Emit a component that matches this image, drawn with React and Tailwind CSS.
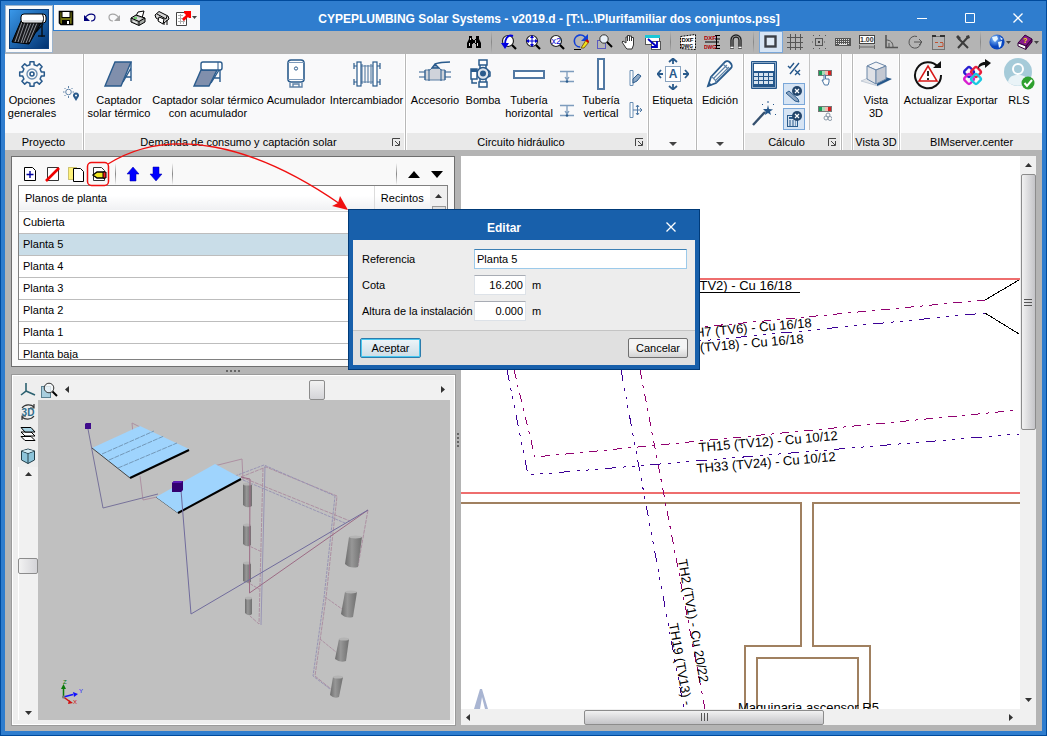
import { useState } from 'react';

const floors = ['Cubierta', 'Planta 5', 'Planta 4', 'Planta 3', 'Planta 2', 'Planta 1', 'Planta baja'];

const INK = '#2a5b8c';

function Ico({ w = 16, h = 16, children, ...rest }) {
  return (
    <svg width={w} height={h} viewBox={`0 0 ${w} ${h}`} fill="none" className="shrink-0" aria-hidden="true" {...rest}>
      {children}
    </svg>
  );
}

/* ---------- Quick access icons ---------- */

function LogoIcon() {
  return (
    <Ico w={40} h={40}>
      <defs>
        <linearGradient id="logoBg" x1="0" y1="0" x2="1" y2="1">
          <stop offset="0" stopColor="#3b9aec" />
          <stop offset="1" stopColor="#00306e" />
        </linearGradient>
      </defs>
      <rect width="40" height="40" fill="url(#logoBg)" />
      <rect x="0.5" y="0.5" width="39" height="39" stroke="#0b3f7e" />
      <path d="M33 13V28M29 27H36M27 23L34 15" stroke="#081018" strokeWidth="1.5" />
      <path d="M12 12L3 33L20 35L32 14Z" fill="#17181c" stroke="#000" />
      <path d="M13 13L6 33M16 13L9 33M19 14L12 34M22 14L14 34M25 14L17 34M28 14L20 33" stroke="#a9adb5" strokeWidth="0.8" />
      <rect x="12" y="5" width="25" height="9" rx="3" fill="#fff" stroke="#000" />
      <path d="M14 12H35" stroke="#b9bcc2" />
      <path d="M33 5C35 7 35 12 33 14" stroke="#000" />
    </Ico>
  );
}

const SaveIcon = () => (
  <Ico>
    <path d="M1.5 1.5H14.5V14.5H3L1.5 13Z" fill="#6f6f10" stroke="#000" strokeWidth="1.6" />
    <rect x="4" y="1.5" width="8" height="6" fill="#fff" stroke="#000" />
    <rect x="4" y="10" width="8" height="5" fill="#000" />
    <rect x="9" y="11" width="2" height="3" fill="#fff" />
  </Ico>
);

const UndoIcon = () => (
  <Ico>
    <path d="M3 8C6 3 13 3 13 7C13 10 11 11 9 11" stroke="#00007a" strokeWidth="1.2" />
    <path d="M2 5V11H8Z" fill="#00007a" />
  </Ico>
);

const RedoIcon = () => (
  <Ico>
    <path d="M13 8C10 3 3 3 3 7C3 10 5 11 7 11" stroke="#a5a5a5" strokeWidth="1.2" />
    <path d="M14 5V11H8Z" fill="#a5a5a5" />
  </Ico>
);

const PrinterIcon = () => (
  <Ico>
    <path d="M6 6L8 2L14 1L12 8Z" fill="#fff" stroke="#000" />
    <path d="M1 8L6 5L15 8V12L9 15.5L1 12Z" fill="#a4a8a4" stroke="#000" />
    <path d="M1 8L9 11.5L15 8M9 11.5V15" stroke="#000" />
    <path d="M3 8L6 6.500L12 8.500L9 10.500Z" fill="#dcdcdc" />
    <path d="M3 11L7 13" stroke="#fff" />
    <path d="M4 8H7" stroke="#00c000" />
  </Ico>
);

const PlotterIcon = () => (
  <Ico>
    <path d="M1 5L5 1.5L14 6L15 9L10 13L2 8Z" fill="#d4d4d4" stroke="#000" />
    <path d="M3 4L12 9L13 6" stroke="#000" />
    <path d="M5 7L4 11L9 14L10 9Z" fill="#fff" stroke="#000" />
    <path d="M13 10V15M10 12V15" stroke="#000" />
  </Ico>
);

const ExportSheetIcon = () => (
  <Ico>
    <path d="M1.5 2.5H11.5V15.5H1.5Z" fill="#fff" stroke="#444" />
    <path d="M3 5.5H8M3 8.5H9M3 11.5H10M5.5 4V14M8.5 7V14" stroke="#b0b0b0" />
    <path d="M7 9L11 5L9 3V1H16V8H14L13 7L9 11Z" fill="#f00" />
  </Ico>
);

const Caret = () => (
  <Ico w={5} h={3}>
    <path d="M0 0H5L2.5 3Z" fill="#444" />
  </Ico>
);

/* ---------- View toolbar icons ---------- */

const Lens = () => (
  <>
    <circle cx="7" cy="7" r="5.5" fill="#fff" stroke="#222" strokeWidth="1.2" />
    <path d="M11 11L15 15" stroke="#000" strokeWidth="2.2" />
  </>
);

const toolGroups = [
  [
    ['Buscar', <Ico>
      <path d="M3 2H6V5H7V10H6V14H1V9L3 5ZM13 2H10V5H9V10H10V14H15V9L13 5ZM6 6H10V9H6Z" fill="#000" />
      <path d="M3.5 9V12M11.5 9V12M4.5 4V6" stroke="#ddd" />
    </Ico>],
  ],
  [
    ['Vista anterior', <Ico>
      <Lens />
      <path d="M12 2C6 0 4 6 4 10" stroke="#0000e0" strokeWidth="2" />
      <path d="M0 9H8L4 15Z" fill="#0000e0" />
    </Ico>],
    ['Ver todo', <Ico>
      <Lens />
      <path d="M7 2V12M2 7H12" stroke="#0000d0" />
      <path d="M7 1L9 4H5ZM7 13L9 10H5ZM1 7L4 5V9ZM13 7L10 5V9Z" fill="#0000d0" />
    </Ico>],
    ['Doble', <Ico>
      <Lens />
      <text x="2.5" y="10" fontSize="9" fontFamily="Liberation Sans" fill="#0000d0">x2</text>
    </Ico>],
    ['Redibujar', <Ico>
      <path d="M13 5A6 6 0 1 0 7 13" stroke="#1040d8" strokeWidth="1.6" />
      <path d="M15 0V7H8Z" fill="#1040d8" />
      <path d="M8 14L13 6L16 8L11 14Z" fill="#f2e21c" stroke="#5a3000" strokeWidth="0.7" />
      <path d="M12.500 7L14 5L16 7L15 9Z" fill="#c00" />
      <path d="M1 15.500H8" stroke="#000" />
    </Ico>],
    ['Zoom ventana', <Ico>
      <rect x="0.5" y="6.5" width="8" height="8" stroke="#0000d0" strokeDasharray="1 1" />
      <circle cx="7" cy="5" r="4.2" fill="#e8f0f8" stroke="#333" />
      <path d="M10 8L15 13" stroke="#000" strokeWidth="2" />
    </Ico>],
    ['Mover', <Ico>
      <path d="M5 14L1 8L2 7L5 9V3H6.5V7V1.500H8.5V7V2H10.5V7V3.5H12.5V11L11 15H6Z" fill="#fff" stroke="#333" />
    </Ico>],
    ['Ventanas', <Ico>
      <rect x="0.5" y="1.5" width="14" height="9" fill="#fff" stroke="#555" />
      <rect x="0" y="1" width="15" height="3" fill="#19c8d8" />
      <rect x="6.5" y="7.5" width="9" height="8" fill="#fff" stroke="#555" />
      <path d="M3 5L11 12M12 7V13H6" stroke="#0000c0" strokeWidth="1.8" />
    </Ico>],
  ],
  [
    ['Importar DXF', <Ico>
      <path d="M0.5 2.5L15.5 0.5V15.500L0.5 14.5Z" fill="#fff" stroke="#000" strokeDasharray="2 1" />
      <text x="1.5" y="8" fontSize="6" fontWeight="bold" fontFamily="Liberation Sans" fill="#000">DXF</text>
      <text x="1" y="14" fontSize="5" fontWeight="bold" fontFamily="Liberation Sans" fill="#000">DWG</text>
    </Ico>],
    ['Capas DXF', <Ico>
      <path d="M1 8H15M11 1.500H16M11 5H16M11 11.500H16M11 14.500H16M12.500 1V15" stroke="#000" />
      <text x="0" y="6" fontSize="6" fontWeight="bold" fontFamily="Liberation Sans" fill="#b00000">DXF</text>
      <text x="0" y="15" fontSize="5" fontWeight="bold" fontFamily="Liberation Sans" fill="#b00000">DWG</text>
    </Ico>],
    ['Referencia a objetos', <Ico>
      <path d="M4 15V6A4 4 0 0 1 12 6V15" stroke="#222" strokeWidth="3.4" />
      <path d="M4 13V6A4 4 0 0 1 12 6V13" stroke="#8c8c8c" />
      <path d="M2.500 13.500H5.500M10.500 13.500H13.500" stroke="#fff" strokeWidth="1.5" />
    </Ico>],
  ],
  [
    ['Marco', <Ico><rect x="2.5" y="2.5" width="10" height="10" fill="#dfeaf6" stroke="#3c4048" strokeWidth="2.4" /></Ico>],
    ['Rejilla', <Ico><path d="M3.5 0V16M8.5 0V16M13.5 0V16M0 3.5H16M0 8.5H16M0 13.5H16" stroke="#555" /></Ico>],
    ['Malla', <Ico>
      <rect x="4.5" y="4.5" width="7" height="7" stroke="#555" />
      <rect x="7" y="7" width="2" height="2" fill="#444" />
      <path d="M2 1.5H15M2 14.5H15M1 8H3M13 8H15" stroke="#555" strokeDasharray="1 5" />
    </Ico>],
    ['Teclado', <Ico>
      <rect x="0" y="4" width="16" height="8" fill="#555" />
      <path d="M1 5.5H15M1 7.5H15M1 9.5H15" stroke="#e0e0e0" strokeDasharray="1 1" />
      <path d="M4 10.5H12" stroke="#e0e0e0" />
    </Ico>],
    ['Cotas', <Ico>
      <rect x="0.5" y="1.5" width="15" height="8" fill="#fff" stroke="#444" />
      <text x="1" y="8" fontSize="7" fontWeight="bold" fontFamily="Liberation Sans" fill="#333">1.00</text>
      <path d="M0 13H16M0.5 11V15M15.5 11V15" stroke="#666" />
    </Ico>],
    ['Ortogonal', <Ico>
      <path d="M3 1V13.5H15" stroke="#555" strokeWidth="1.6" />
      <path d="M3 6C8 6 10 9 10 13M6 9V13" stroke="#555" />
    </Ico>],
    ['Polar', <Ico>
      <path d="M14 8A6 6 0 1 1 10 2.5M7 8H15M12 5L15 8L12 11" stroke="#555" />
    </Ico>],
    ['Seleccionar', <Ico>
      <rect x="1.5" y="2.5" width="12" height="13" stroke="#333" strokeDasharray="1 1" />
      <path d="M4 8.500H7M9 8.500H12M7 12.500H12V9" stroke="#c05030" />
      <path d="M1 2H5M9 2H14" stroke="#333" strokeWidth="2" />
    </Ico>],
    ['Herramientas', <Ico>
      <path d="M3 4L13 14M13 3L3 14" stroke="#3c3c3c" strokeWidth="2" />
      <path d="M1 3L3 1L6 4L4 6ZM11 2L14 1L15 4L12 5Z" fill="#3c3c3c" />
    </Ico>],
  ],
];

const GlobeIcon = () => (
  <Ico>
    <defs>
      <radialGradient id="globe" cx="0.35" cy="0.3">
        <stop offset="0" stopColor="#8ec8ff" />
        <stop offset="1" stopColor="#0846c0" />
      </radialGradient>
    </defs>
    <circle cx="8" cy="8" r="7.6" fill="url(#globe)" />
    <path d="M3 3L8 2L9 5L6 8L4 6ZM9 8L13 7L12 12L10 14ZM11 3L14 5L12 6Z" fill="#e6f6ff" />
  </Ico>
);

const BookIcon = () => (
  <Ico>
    <path d="M1 9L8 1L15 5L9 12Z" fill="#8a1a8c" stroke="#33003a" />
    <path d="M1 9V12L9 15.5V12Z" fill="#fff" stroke="#33003a" />
    <path d="M9 12V15L15 8V5Z" fill="#6a0a6c" stroke="#33003a" />
    <text x="6" y="9" fontSize="7" fontWeight="bold" fontFamily="Liberation Sans" fill="#ffe800">?</text>
  </Ico>
);

/* ---------- Ribbon icons ---------- */

// Outline of a cog: each tooth is four points between the two radii
const cogPath = (cx, cy, inner, outer, teeth) => {
  const pts = [];
  for (let i = 0; i < teeth; i++) {
    const a = (i * 360) / teeth;
    [[-13, inner], [-9, outer], [9, outer], [13, inner]].forEach(([d, r]) => {
      const t = ((a + d) * Math.PI) / 180;
      pts.push(`${(cx + r * Math.sin(t)).toFixed(1)} ${(cy - r * Math.cos(t)).toFixed(1)}`);
    });
  }
  return `M${pts.join('L')}Z`;
};

const GearIcon = () => (
  <Ico w={32} h={32}>
    <path d={cogPath(16, 16, 9.5, 12.5, 8)} stroke={INK} strokeWidth="1.5" strokeLinejoin="round" />
    <circle cx="16" cy="16" r="5" stroke="#6f90b2" strokeWidth="1.4" />
    <circle cx="16" cy="16" r="2" stroke={INK} strokeWidth="1.6" />
  </Ico>
);

const SunPinIcon = () => (
  <Ico w={16} h={16}>
    <circle cx="5.5" cy="6" r="2.8" stroke="#5f83a8" />
    <path d="M5.5 0V2M5.5 10V12M0 6H1.5M9.5 6H11M1.5 2L2.5 3M9.5 2L8.5 3M1.5 10L2.5 9" stroke="#5f83a8" />
    <path d="M13 15L10.2 10.5A3 3 0 1 1 15.8 10.5Z" fill={INK} />
    <circle cx="13" cy="9.5" r="1" fill="#fff" />
  </Ico>
);

const CollectorIcon = () => (
  <Ico w={32} h={32}>
    <path d="M28 4V23M22 19H28M20 24L28 10" stroke={INK} strokeWidth="1.4" />
    <path d="M12 4H28L18 28H2Z" fill="#808fac" stroke={INK} strokeWidth="1.4" />
  </Ico>
);

const CollectorTankIcon = () => (
  <Ico w={32} h={32}>
    <path d="M28 12V24M22 20H28M19 25L27 12" stroke={INK} strokeWidth="1.4" />
    <path d="M9 12H25L17 28H2Z" fill="#808fac" stroke={INK} strokeWidth="1.4" />
    <rect x="9" y="4" width="21" height="8" rx="2" fill="#fff" stroke={INK} strokeWidth="1.4" />
    <path d="M26 4V12" stroke={INK} />
  </Ico>
);

const TankIcon = () => (
  <Ico w={32} h={32}>
    <rect x="8" y="2" width="16" height="22" rx="3" fill="#fff" stroke={INK} strokeWidth="1.6" />
    <path d="M8 4.500H24M8 21.500H24" stroke="#7d9aba" />
    <path d="M10 25V29H22V25M13 29V26H19V29" stroke="#5f83a8" strokeWidth="1.4" />
    <circle cx="16" cy="10.5" r="1.6" stroke={INK} />
  </Ico>
);

const ExchangerIcon = () => (
  <Ico w={32} h={32}>
    <g stroke={INK} strokeWidth="1.2">
      <path d="M11 6V26M14 7V25M17 7V25M20 6V26M6 8H24M6 24H24" stroke="#5f83a8" />
      <rect x="6" y="4" width="4" height="24" fill="#fff" />
      <rect x="22" y="4" width="4" height="24" fill="#fff" />
      <path d="M3 5V11M3 21V27M29 5V11M29 21V27M3 8H6M3 24H6M26 8H29M26 24H29" />
    </g>
  </Ico>
);

const ValveIcon = () => (
  <Ico w={32} h={32}>
    <path d="M0 14H32M0 19H32" stroke={INK} strokeWidth="1.2" />
    <path d="M6 12H11L14 9H19L22 12H26V22H6Z" fill="#cfd3da" stroke="#5b7fa3" />
    <path d="M6 12V22M10 11V23M22 11V23M26 12V22" stroke={INK} />
    <path d="M13 10L16 6L20 10ZM16 6C21 4 24 4 31 4" fill="#8fa6c0" stroke={INK} strokeWidth="1.4" />
  </Ico>
);

const PumpIcon = () => (
  <Ico w={32} h={32}>
    <g stroke={INK} strokeWidth="1.5">
      <rect x="12" y="2" width="8" height="5" fill="#fff" />
      <rect x="12" y="24" width="8" height="5" fill="#fff" />
      <path d="M13 7V24M19 7V24" />
      <circle cx="16" cy="15.5" r="6" fill="#dfe5ec" />
      <rect x="4" y="11" width="6" height="10" fill="#fff" />
      <path d="M5 21V25H10M21 12L23 14V18L21 19" />
    </g>
    <circle cx="16" cy="15.5" r="3" fill={INK} />
    <rect x="4" y="11" width="6" height="3" fill={INK} />
  </Ico>
);

const PipeHIcon = () => (
  <Ico w={32} h={32}><rect x="1" y="13" width="30" height="7" fill="#fff" stroke="#5279a3" strokeWidth="2" /></Ico>
);

const PipeVIcon = () => (
  <Ico w={32} h={32}><rect x="13" y="1" width="6" height="30" fill="#fff" stroke="#5279a3" strokeWidth="2" /></Ico>
);

const LevelIcon = () => (
  <Ico w={14} h={14}>
    <path d="M0 1.5H14M0 11.5H14M7 2V10M5 7L7 10L9 7" stroke="#7d9cbd" strokeWidth="1.3" />
    <circle cx="7" cy="11.500" r="1.3" fill={INK} />
  </Ico>
);

const PipeEditIcon = () => (
  <Ico w={14} h={16}>
    <path d="M2 0.5H5V15.5H2Z" fill="#fff" stroke="#6a8fb5" />
    <path d="M5 9L10 4L13 6L9 11L5 13Z" fill="#8ea8c5" stroke={INK} />
  </Ico>
);

const PipeMoveIcon = () => (
  <Ico w={14} h={16}>
    <path d="M2 0.5H5V15.5H2Z" fill="#fff" stroke="#6a8fb5" />
    <path d="M9.5 3V13M5 8H14M8 5L9.5 3L11 5M8 11L9.5 13L11 11M12 6L14 8L12 10" stroke="#4c77a3" />
  </Ico>
);

const LabelIcon = () => (
  <Ico w={32} h={32}>
    <rect x="8.5" y="8.5" width="15" height="15" fill="#fff" stroke="#8aa4c0" />
    <path d="M16 6V1M12 4L16 0.500L20 4M16 26V31M12 28L16 31.5L20 28M6 16H1M4 12L0.5 16L4 20M26 16H31M28 12L31.5 16L28 20" stroke={INK} strokeWidth="1.8" />
    <text x="16" y="20" textAnchor="middle" fontSize="12" fontWeight="bold" fontFamily="Liberation Sans" fill={INK}>A</text>
  </Ico>
);

const PencilIcon = () => (
  <Ico w={32} h={32}>
    <path d="M4 28L7 19L21 4C24 1 30 7 27 10L12 25Z" fill="#fff" stroke={INK} strokeWidth="1.8" />
    <path d="M7 19C9 19 12 22 12 25M9 21L23 7M11 23L25 9M19 6L25 12" stroke="#5f83a8" strokeWidth="1.2" />
    <path d="M3 29L5 24L8 27Z" fill={INK} />
  </Ico>
);

const CalculatorIcon = () => (
  <Ico w={26} h={28}>
    <rect x="0" y="0" width="26" height="28" rx="1" fill="#24568a" />
    <rect x="1.5" y="1.5" width="23" height="25" stroke="#b9cde2" strokeWidth="0.7" />
    <rect x="3" y="3" width="20" height="7" fill="#fff" />
    {[12, 16, 20].map((y) =>
      [3, 8, 13, 18].map((x) => <rect key={`${x}-${y}`} x={x} y={y} width="4" height="3" fill="#d6e3f0" />)
    )}
  </Ico>
);

const WandIcon = () => (
  <Ico w={26} h={26}>
    <path d="M2 24L14 11" stroke="#35506e" strokeWidth="2.4" />
    <path d="M17 4L18 8L22 8.5L19 10.500L20 14L17 12L14 14L14.500 10.5L12 8L16 8Z" fill="#24568a" />
    <path d="M17 0V2M23 3L22 4M24 13L25 14M11 3L12 4" stroke="#24568a" />
  </Ico>
);

const CheckFormulaIcon = () => (
  <Ico w={14} h={14}>
    <path d="M1 4L3 6L7 1M3 12L12 1M8 8L13 13M13 8L8 13" stroke="#24568a" strokeWidth="1.4" />
  </Ico>
);

const ErrorBadge = () => (
  <>
    <circle cx="12" cy="6" r="5" fill="#24466c" />
    <path d="M10 4L14 8M14 4L10 8" stroke="#fff" strokeWidth="1.2" />
  </>
);

const PencilErrorIcon = () => (
  <Ico w={18} h={18}>
    <path d="M1 8L4 6L13 14L14 17L10 16Z" fill="#8ba4c2" stroke={INK} />
    <ErrorBadge />
  </Ico>
);

const CalcErrorIcon = () => (
  <Ico w={18} h={18}>
    <rect x="2.5" y="5.5" width="10" height="11" fill="#d5e2f0" stroke={INK} />
    <path d="M4 8H11" stroke={INK} strokeWidth="2" />
    <path d="M4 11H11M4 13H11M4 15H11" stroke={INK} strokeDasharray="2 1" />
    <ErrorBadge />
  </Ico>
);

const ScaleBar = () => (
  <>
    <rect x="0" y="0" width="14" height="6" fill="#777" />
    <rect x="1" y="1" width="3" height="4" fill="#18a058" />
    <rect x="4" y="1" width="3" height="4" fill="#a8dcb8" />
    <rect x="7" y="1" width="3" height="4" fill="#f3b8b0" />
    <rect x="10" y="1" width="3" height="4" fill="#d82020" />
  </>
);

const ScaleHandIcon = () => (
  <Ico w={14} h={16}>
    <ScaleBar />
    <path d="M6 14L4 10H6V5H7.5V9H11V12L10 15H6.5Z" fill="#fff" stroke="#4c77a3" />
  </Ico>
);

const ScaleGearIcon = () => (
  <Ico w={14} h={16}>
    <ScaleBar />
    <circle cx="10" cy="9" r="2" stroke="#8a99a8" />
    <circle cx="8" cy="12" r="2" stroke="#8a99a8" />
    <circle cx="12" cy="12.5" r="2" stroke="#8a99a8" />
  </Ico>
);

const CubeIcon = () => (
  <Ico w={32} h={32}>
    <path d="M1 23L15 17L31 21L18 28Z" fill="#e3e6ea" stroke="#b0bccb" strokeWidth="0.7" />
    <path d="M25 19L32 21L17 28V24Z" fill="#24568a" />
    <path d="M7 8L16 4L26 8L16 12Z" fill="#f4f4f6" stroke="#6b87a8" />
    <path d="M7 8V21L16 26V12Z" fill="#dfe1e6" stroke="#6b87a8" />
    <path d="M16 12V26L26 21V8Z" fill="#c3c8d2" stroke="#6b87a8" />
  </Ico>
);

const UpdateIcon = () => (
  <Ico w={32} h={32}>
    <path d="M26 9A13 13 0 1 0 29 17" stroke="#111" strokeWidth="2" />
    <path d="M21 10H29V3Z" fill="#111" />
    <path d="M16 8L25 23H7Z" fill="#fff" stroke="#d81818" strokeWidth="1.5" />
    <path d="M16 13V18M16 20V22" stroke="#111" strokeWidth="1.8" />
  </Ico>
);

const BimIcon = () => (
  <Ico w={32} h={32}>
    <g strokeWidth="2.4">
      <rect x="4" y="10" width="8" height="8" rx="2" transform="rotate(45 8 14)" stroke="#2a1fd0" />
      <rect x="11" y="10" width="8" height="8" rx="2" transform="rotate(45 15 14)" stroke="#e8203c" />
      <rect x="4" y="17" width="8" height="8" rx="2" transform="rotate(45 8 21)" stroke="#d81fd0" />
      <rect x="11" y="17" width="8" height="8" rx="2" transform="rotate(45 15 21)" stroke="#18c8e0" />
    </g>
    <path d="M17 11C17 6 20 4 24 4V1L30 5L24 10V7C21 7 19 8 17 11Z" fill="#111" />
  </Ico>
);

const UserIcon = () => (
  <Ico w={32} h={32}>
    <circle cx="15" cy="14" r="14" fill="#a6cbd9" />
    <circle cx="15" cy="11" r="5" fill="#a6cbd9" stroke="#fff" strokeWidth="2" />
    <path d="M5 24C6 18 10 17 15 17C20 17 24 18 25 24C20 29 10 29 5 24Z" fill="#e9f3f7" />
    <circle cx="25" cy="25" r="6.5" fill="#2ea02e" />
    <path d="M21.5 25L24 28L29 22" stroke="#fff" strokeWidth="2" />
  </Ico>
);

/* ---------- Floor list icons ---------- */

const sheet = 'M2.5 1.5H10.5L13.5 4.5V14.5H2.5Z';

const NewIcon = () => (
  <Ico>
    <path d={sheet} fill="#fff" stroke="#000" />
    <path d="M8 5V12M4.5 8.5H11.5" stroke="#0000a0" strokeWidth="1.4" />
  </Ico>
);

const DeleteIcon = () => (
  <Ico>
    <path d="M2.5 1.5H13.5V14.5H2.5Z" fill="#fff" stroke="#333" />
    <path d="M1 15L14 2" stroke="#f00000" strokeWidth="2.6" />
  </Ico>
);

const CopyIcon = () => (
  <Ico w={18}>
    <path d="M1.5 1.5H9.5V13.5H1.5Z" fill="#fff27a" stroke="#a09020" strokeDasharray="1 1" />
    <path d="M6.5 2.5H13.5L16.5 5.5V15.5H6.5Z" fill="#fff" stroke="#000" />
  </Ico>
);

const EditIcon = () => (
  <Ico>
    <path d={sheet} fill="#fff" stroke="#333" />
    <path d="M2 9L6 6H13V12H6Z" fill="#f0e820" stroke="#000" strokeWidth="1.4" />
    <path d="M12 6H15V12H12Z" fill="#f02020" stroke="#000" />
  </Ico>
);

const ArrowUpIcon = () => (
  <Ico><path d="M8 1L14 8H11V15H5V8H2Z" fill="#0000ff" stroke="#0000a0" strokeWidth="0.5" /></Ico>
);

const ArrowDownIcon = () => (
  <Ico><path d="M8 15L14 8H11V1H5V8H2Z" fill="#0000ff" stroke="#0000a0" strokeWidth="0.5" /></Ico>
);

/* ---------- 3D view icons ---------- */

const AxesIcon = () => (
  <Ico><path d="M6 1V9L1 13M6 9L15 13" stroke="#2c6170" strokeWidth="1.6" /></Ico>
);

const FitIcon = () => (
  <Ico w={18}>
    <rect x="1.5" y="4.5" width="9" height="11" fill="#a8cede" stroke="#5a8090" />
    <circle cx="9" cy="6" r="4.8" fill="#f4f8fa" fillOpacity="0.8" stroke="#333" />
    <path d="M12.5 9.5L17 14" stroke="#000" strokeWidth="2" />
  </Ico>
);

const OrbitIcon = () => (
  <Ico>
    <path d="M2 4C5 0 11 0 14 3M14 12C11 16 5 16 2 13M14 0V4H10M2 16V12H6" stroke="#333" strokeWidth="1.2" />
    <text x="8" y="12" textAnchor="middle" fontSize="10" fontWeight="bold" fontFamily="Liberation Sans" fill="#2f6d8c">3D</text>
  </Ico>
);

const LayersIcon = () => (
  <Ico>
    <path d="M1 10.500H11L15 14.500H5Z" fill="#fff" stroke="#000" />
    <path d="M1 6H11L15 10H5Z" fill="#fff" stroke="#000" />
    <path d="M1 1.5H11L15 6H5Z" fill="#a8d4e4" stroke="#000" />
  </Ico>
);

const SolidIcon = () => (
  <Ico>
    <path d="M1.5 3L8 1L14.5 3V12L8 15.5L1.5 12Z" fill="#8cc4da" stroke="#24404c" />
    <path d="M8 5.5V15.5M1.5 3L8 5.5L14.5 3" stroke="#24404c" />
    <path d="M2 3L8 1.5L14 3L8 5Z" fill="#d4ebf3" />
  </Ico>
);

/* ---------- Small building blocks ---------- */

function ToolButton({ label, pressed, children, className = 'w-6' }) {
  return (
    <button
      type="button"
      aria-label={label}
      className={`${className} h-[22px] flex items-center justify-center gap-px ${pressed ? 'border border-[#7aa7d9] bg-[#d6e4f4]' : ''}`}
    >
      {children}
    </button>
  );
}

const Divider = () => <div className="w-px h-[22px] mx-[5px] bg-linear-to-b from-transparent via-[#888] to-transparent" />;

function RibbonGroup({ title, launcher, className = '', children }) {
  return (
    <section className={`flex flex-col ${className}`}>
      <div className="flex-1 flex items-start bg-[#f9f9fa]">{children}</div>
      <div className="h-[17px] flex items-center bg-[#e9e9e9] leading-4">
        <span className="flex-1 text-center whitespace-nowrap">{title}</span>
        {launcher && (
          <button type="button" aria-label={`Opciones de ${title}`} className="pr-1">
            <Ico w={8} h={8}>
              <path d="M0.5 8V0.5H8M3 3L7 7M7.5 3V7.5H3" stroke="#444" />
            </Ico>
          </button>
        )}
      </div>
    </section>
  );
}

// Groups that collapse to one drop-down button
function DropGroup({ title, icon, className }) {
  return (
    <button type="button" className={`flex flex-col items-center gap-1 pt-1 pb-1 bg-[#f9f9fa] ${className}`}>
      {icon}
      <span className="leading-[13px]">{title}</span>
      <span className="mt-auto">
        <Ico w={8} h={4}><path d="M0 0H8L4 4Z" fill="#444" /></Ico>
      </span>
    </button>
  );
}

const Split = () => <div className="w-[3px] border-x border-x-white bg-[#b8b8b8]" />;

function BigButton({ icon, lines, className }) {
  return (
    <button type="button" className={`flex flex-col items-center gap-1 pt-1 ${className}`}>
      {icon}
      <span className="leading-[13px] whitespace-nowrap">
        {lines.map((l) => <span key={l} className="block">{l}</span>)}
      </span>
    </button>
  );
}

const Tri = ({ dir }) => {
  const d = { up: 'M0 5L3.5 1L7 5Z', down: 'M0 2H7L3.5 6Z', left: 'M5 0V7L1 3.5Z', right: 'M2 0V7L6 3.5Z' }[dir];
  return <Ico w={7} h={7}><path d={d} fill="#333" /></Ico>;
};

const Grip = ({ vertical }) => (
  <Ico w={8} h={8}>
    <path d={vertical ? 'M0 1.5H8M0 4.5H8M0 7.5H8' : 'M1.5 0V8M4.5 0V8M7.5 0V8'} stroke="#555" />
  </Ico>
);

/* ---------- Drawings ---------- */

function FloorPlan() {
  return (
    <svg viewBox="461 156 559 553" preserveAspectRatio="xMinYMin slice" className="block w-full h-full" fill="none">
      <path d="M461 279H1400M461 493H1400" stroke="#ee6e6e" strokeWidth="2" />
      <g stroke="#a08060" strokeWidth="2">
        <path d="M461 503H801V646H745V900" />
        <path d="M1400 503H813V646H870V900" />
        <path d="M757 900V658H858V900" />
      </g>
      <g stroke="#900070" strokeDasharray="9 6 3 6" shapeRendering="crispEdges">
        <path d="M514 370L535 457L1019 410" />
        <path d="M640 370L705 709" />
        <path d="M690 328L985 300" />
      </g>
      <g stroke="#3c0096" strokeDasharray="11 7 3 6 3 6 3 7" shapeRendering="crispEdges">
        <path d="M507 370L528 475L1019 434" />
        <path d="M621 370L684 709" />
        <path d="M690 342L985 313" />
      </g>
      <path d="M985 300L1019 280M985 313L1019 334M700 292.5H800" stroke="#000" shapeRendering="crispEdges" />
      <path d="M474 709L480 689H482L488 709H485L482 697L480 709Z" fill="#a9b5d2" />
      <g fontFamily="Liberation Sans" fontSize="13" fill="#000">
        <text x="792" y="290" textAnchor="end">(TV2) - Cu 16/18</text>
        <text textAnchor="end" transform="translate(812 327) rotate(-5)">TH7 (TV6) - Cu 16/18</text>
        <text textAnchor="end" transform="translate(804 343) rotate(-5)">(TV18) - Cu 16/18</text>
        <text transform="translate(699 452) rotate(-5)">TH15 (TV12) - Cu 10/12</text>
        <text transform="translate(697 473) rotate(-5)">TH33 (TV24) - Cu 10/12</text>
        <text transform="translate(678 560) rotate(80)">TH2 (TV1) - Cu 20/22</text>
        <text transform="translate(669 624) rotate(80)">TH19 (TV13) -</text>
        <text x="738" y="712">Maquinaria ascensor R5</text>
      </g>
    </svg>
  );
}

const tanks = [
  'M243 484V505Q247 509 252 506V484Z',
  'M243 525V544Q247 548 251 545V525Z',
  'M243 563V581Q247 584 251 582V563Z',
  'M245 598V613Q249 617 252 614V598Z',
  'M349 537L345 564Q350 569 358 567L362 537Z',
  'M345 592L341 614Q346 619 353 617L357 592Z',
  'M339 639L335 659Q340 663 346 661L349 639Z',
  'M333 677L330 695Q334 699 339 697L343 677Z',
];

const tankTops = [
  [247.5, 484, 4.5], [247, 525, 4], [247, 563, 4], [248.5, 598, 3.5],
  [355.5, 537, 6.5], [351, 592, 6], [344, 639, 5], [338, 677, 5],
];

function Scene3D() {
  return (
    <svg viewBox="38 400 412 320" preserveAspectRatio="xMinYMin slice" className="block w-full h-full" fill="none">
      <defs>
        <linearGradient id="tank">
          <stop offset="0" stopColor="#6c6c6c" />
          <stop offset="0.4" stopColor="#979797" />
          <stop offset="1" stopColor="#6f6f6f" />
        </linearGradient>
      </defs>
      <g stroke="#ad90a2">
        <path d="M133 434L132 423L140 427M140 476L143 500L157 497" />
        <path d="M214 466L242 459L243 480" />
        <path d="M241 477L266 467L337 496L326 598L315 676L331 689" strokeDasharray="4 1" />
        <path d="M241 477L350 521M368 510L358 566" strokeDasharray="4 1" />
        <path d="M263 468L259 624L250 616" strokeDasharray="4 1" />
        <path d="M325 597L342 609M320 639L336 652M247 545L262 552M247 582L259 589" strokeDasharray="3 1" />
      </g>
      <g stroke="#9894b4">
        <path d="M88 429L103 508L158 494" stroke="#77729a" />
        <path d="M235 476L264 465L335 496L324 598L313 676L330 689" strokeDasharray="3 1" />
        <path d="M243 480L345 523" strokeDasharray="3 1" />
        <path d="M265 466L261 625" />
      </g>
      {tanks.map((d) => <path key={d} d={d} fill="url(#tank)" />)}
      {tankTops.map(([x, y, r]) => <ellipse key={`${x}-${y}`} cx={x} cy={y} rx={r} ry="1.5" fill="#b4b4b4" />)}
      <path d="M241 477L250 479L249.5 593L368 510" stroke="#9c6a84" />
      <path d="M92 448L140 426L189 449L130 478Z" fill="#9fd4fd" />
      <path d="M130 478L189 450" stroke="#000" strokeWidth="2" />
      <path d="M92 448L130 478M178 513L156 497" stroke="#444" />
      <path d="M102 454L154 431M109 460L164 436M118 468L177 443" stroke="#7398b8" strokeDasharray="5 1" />
      <path d="M156 497L215 464L241 478L178 513Z" fill="#9fd4fd" />
      <path d="M178 513L241 479" stroke="#000" strokeWidth="2" />
      <path d="M181 490L191 614L368 510" stroke="#706b9c" />
      <path d="M85 424L86 423H91L91 429H85Z" fill="#3f0b8c" />
      <path d="M172 483L174 481H183V490L181 492H172Z" fill="#330070" />
      <path d="M172 483L174 481H183L181 483Z" fill="#5a18b4" />
      <g strokeWidth="1.5">
        <path d="M63.5 697V688" stroke="#0a7a0a" />
        <path d="M63.5 697L73 694.5" stroke="#1010ff" />
        <path d="M63.5 697L69 701" stroke="#d01010" />
      </g>
      <path d="M61 689L63.5 684L66 689Z" fill="#0a7a0a" />
      <path d="M73 692L78 694L74 697Z" fill="#1010ff" />
      <path d="M69 700L73 703L68 704Z" fill="#d01010" />
      <circle cx="63.5" cy="697" r="1.5" fill="#777" />
      <g fontFamily="Liberation Sans" fontSize="6">
        <text x="63" y="684" fill="#0a7a0a">Z</text>
        <text x="79" y="693" fill="#1010ff">Y</text>
        <text x="73" y="704" fill="#d01010">X</text>
      </g>
    </svg>
  );
}

/* ---------- Page sections ---------- */

function Header() {
  return (
    <header className="flex bg-[#b4b4b4]">
      <div className="w-12 h-12 flex items-center justify-center bg-[#f9f9fa] border border-[#9db4cc]">
        <LogoIcon />
      </div>
      <div className="flex-1 flex flex-col">
        <div className="h-[26px] flex items-start bg-[#2f7dce]">
          <div className="h-[25px] flex items-center pr-0.5 ml-px bg-[#f9f9fa]">
            <ToolButton label="Guardar"><SaveIcon /></ToolButton>
            <ToolButton label="Deshacer"><UndoIcon /></ToolButton>
            <ToolButton label="Rehacer"><RedoIcon /></ToolButton>
            <ToolButton label="Imprimir"><PrinterIcon /></ToolButton>
            <ToolButton label="Trazar"><PlotterIcon /></ToolButton>
            <ToolButton label="Exportar hoja"><ExportSheetIcon /><Caret /></ToolButton>
          </div>
          <h1 className="flex-1 pt-1 text-center text-xs leading-5 font-bold text-white whitespace-nowrap">
            CYPEPLUMBING Solar Systems - v2019.d - [T:\...\Plurifamiliar dos conjuntos.pss]
          </h1>
          <div className="flex">
            <button type="button" aria-label="Minimizar" className="w-12 h-[26px] flex items-center justify-center">
              <Ico w={11} h={11}><path d="M0 5.5H10" stroke="#fff" /></Ico>
            </button>
            <button type="button" aria-label="Maximizar" className="w-12 h-[26px] flex items-center justify-center">
              <Ico w={11} h={11}><path d="M0.5 0.5H9.5V9.5H0.5Z" stroke="#fff" /></Ico>
            </button>
            <button type="button" aria-label="Cerrar" className="w-12 h-[26px] flex items-center justify-center">
              <Ico w={11} h={11}><path d="M0.5 0.5L9.5 9.5M9.5 0.5L0.5 9.5" stroke="#fff" strokeWidth="1.3" /></Ico>
            </button>
          </div>
        </div>
        <div className="flex-1 flex items-center justify-end">
          {toolGroups.map((group, i) => (
            <div key={i} className="flex items-center">
              {i > 0 && <Divider />}
              {group.map(([label, icon]) => (
                <ToolButton key={label} label={label} pressed={label === 'Marco'}>{icon}</ToolButton>
              ))}
            </div>
          ))}
          <Divider />
          <ToolButton label="Idioma" className="w-7"><GlobeIcon /><Caret /></ToolButton>
          <ToolButton label="Ayuda" className="w-7"><BookIcon /><Caret /></ToolButton>
        </div>
      </div>
    </header>
  );
}

function Ribbon() {
  return (
    <div className="h-24 flex bg-[#f9f9fa]">
      <RibbonGroup title="Proyecto" className="w-[77px]">
        <BigButton icon={<GearIcon />} lines={['Opciones', 'generales']} className="w-[54px]" />
        <button type="button" aria-label="Emplazamiento" className="mt-8 ml-1"><SunPinIcon /></button>
      </RibbonGroup>
      <Split />
      <RibbonGroup title="Demanda de consumo y captación solar" launcher className="w-[319px]">
        <BigButton icon={<CollectorIcon />} lines={['Captador', 'solar térmico']} className="w-[68px]" />
        <BigButton icon={<CollectorTankIcon />} lines={['Captador solar térmico', 'con acumulador']} className="w-[110px]" />
        <BigButton icon={<TankIcon />} lines={['Acumulador']} className="w-[66px]" />
        <BigButton icon={<ExchangerIcon />} lines={['Intercambiador']} className="w-[75px]" />
      </RibbonGroup>
      <Split />
      <RibbonGroup title="Circuito hidráulico" launcher className="w-60">
        <BigButton icon={<ValveIcon />} lines={['Accesorio']} className="w-14" />
        <BigButton icon={<PumpIcon />} lines={['Bomba']} className="w-10" />
        <BigButton icon={<PipeHIcon />} lines={['Tubería', 'horizontal']} className="w-[52px]" />
        <div className="w-6 flex flex-col items-center gap-5 pt-4">
          <button type="button" aria-label="Subir tubería"><LevelIcon /></button>
          <button type="button" aria-label="Bajar tubería"><LevelIcon /></button>
        </div>
        <BigButton icon={<PipeVIcon />} lines={['Tubería', 'vertical']} className="w-11" />
        <div className="w-6 flex flex-col items-center gap-4 pt-4">
          <button type="button" aria-label="Editar tubería"><PipeEditIcon /></button>
          <button type="button" aria-label="Mover tubería"><PipeMoveIcon /></button>
        </div>
      </RibbonGroup>
      <Split />
      <DropGroup title="Etiqueta" icon={<LabelIcon />} className="w-[45px]" />
      <Split />
      <DropGroup title="Edición" icon={<PencilIcon />} className="w-11" />
      <Split />
      <RibbonGroup title="Cálculo" launcher className="w-[95px]">
        <div className="w-[38px] flex flex-col items-center gap-3 pt-[7px]">
          <button type="button" aria-label="Calcular"><CalculatorIcon /></button>
          <button type="button" aria-label="Dimensionar"><WandIcon /></button>
        </div>
        <div className="w-[22px] flex flex-col items-center gap-[3px] pt-1">
          <ToolButton label="Comprobar" className="w-[22px]"><CheckFormulaIcon /></ToolButton>
          <ToolButton label="Errores de edición" pressed className="w-[22px]"><PencilErrorIcon /></ToolButton>
          <ToolButton label="Errores de cálculo" pressed className="w-[22px]"><CalcErrorIcon /></ToolButton>
        </div>
        <div className="w-px h-[76px] ml-1 bg-[#c4c4c4]" />
        <div className="flex-1 flex flex-col items-center gap-5 pt-4">
          <button type="button" aria-label="Escala de colores"><ScaleHandIcon /></button>
          <button type="button" aria-label="Configurar escala"><ScaleGearIcon /></button>
        </div>
      </RibbonGroup>
      <Split />
      <RibbonGroup title="" className="w-2" />
      <Split />
      <RibbonGroup title="Vista 3D" className="w-11">
        <BigButton icon={<CubeIcon />} lines={['Vista', '3D']} className="w-full" />
      </RibbonGroup>
      <Split />
      <RibbonGroup title="BIMserver.center" className="flex-1">
        <BigButton icon={<UpdateIcon />} lines={['Actualizar']} className="w-[54px]" />
        <BigButton icon={<BimIcon />} lines={['Exportar']} className="w-11" />
        <BigButton icon={<UserIcon />} lines={['RLS']} className="w-10" />
      </RibbonGroup>
    </div>
  );
}

function FloorList({ selected, onSelect }) {
  return (
    <section className="h-[211px] flex flex-col px-1.5 pt-1.5 pb-1.5 bg-[#f9f9f9] border border-[#6e6e6e]">
      <div className="h-[22px] flex items-center">
        <ToolButton label="Añadir" className="w-[23px]"><NewIcon /></ToolButton>
        <ToolButton label="Borrar" className="w-[23px]"><DeleteIcon /></ToolButton>
        <ToolButton label="Copiar" className="w-[23px]"><CopyIcon /></ToolButton>
        <ToolButton label="Editar" className="w-[23px]"><EditIcon /></ToolButton>
        <Divider />
        <ToolButton label="Subir" className="w-[23px]"><ArrowUpIcon /></ToolButton>
        <ToolButton label="Bajar" className="w-[23px]"><ArrowDownIcon /></ToolButton>
        <Divider />
        <div className="flex-1" />
        <Divider />
        <ToolButton label="Planta superior" className="w-[23px]"><Ico w={12} h={7}><path d="M0 7H12L6 0Z" fill="#000" /></Ico></ToolButton>
        <ToolButton label="Planta inferior" className="w-[23px]"><Ico w={12} h={7}><path d="M0 0H12L6 7Z" fill="#000" /></Ico></ToolButton>
      </div>
      <div className="flex-1 min-h-0 flex overflow-hidden bg-white border border-[#808080]">
        <table className="flex-1 h-fit w-full border-collapse">
          <thead>
            <tr className="h-[25px] border-b border-[#d0d0d0] bg-linear-to-b from-white from-40% to-[#f0f1f3]">
              <th scope="col" className="pl-1.5 text-left font-normal">Planos de planta</th>
              <th scope="col" className="w-14 border-l border-[#dcdcdc] font-normal">Recintos</th>
            </tr>
          </thead>
          <tbody>
            {floors.map((f) => (
              <tr
                key={f}
                onClick={() => onSelect(f)}
                className={`h-[22px] border-b border-[#bdbdbd] ${selected === f ? 'bg-[#c9dde8]' : ''}`}
              >
                <td className="pl-1 leading-4">{f}</td>
                <td />
              </tr>
            ))}
          </tbody>
        </table>
        <div className="w-[17px] flex flex-col items-center bg-[#efefef]">
          <div className="h-5 flex items-center"><Tri dir="up" /></div>
          <div className="w-3.5 h-20 border border-[#999] bg-[#dedede]" />
        </div>
      </div>
    </section>
  );
}

function View3D() {
  return (
    <section className="flex-1 min-h-0 flex p-1 pt-[3px] ml-px bg-[#eeeeee] border border-white outline outline-[#9a9a9a]">
      <div className="w-[21px] flex flex-col items-center">
        <ToolButton label="Ejes" className="w-5"><AxesIcon /></ToolButton>
        <ToolButton label="Orbitar" className="w-5"><OrbitIcon /></ToolButton>
        <ToolButton label="Capas" className="w-5"><LayersIcon /></ToolButton>
        <ToolButton label="Sólido" className="w-5"><SolidIcon /></ToolButton>
        <div className="flex-1 w-5 flex flex-col items-center justify-between py-1 bg-[#f1f1f1] border-l border-white">
          <Tri dir="up" />
          <div className="w-5 h-4 mb-14 rounded-xs border border-[#8c8c8c] bg-linear-to-r from-[#f2f2f2] to-[#d4d4d8]" />
          <Tri dir="down" />
        </div>
      </div>
      <div className="flex-1 min-w-0 flex flex-col">
        <div className="h-[21px] flex items-center">
          <ToolButton label="Encuadrar" className="w-[22px]"><FitIcon /></ToolButton>
          <div className="flex-1 h-5 flex items-center justify-between px-1 bg-[#f1f1f1]">
            <Tri dir="left" />
            <div className="w-4 h-5 ml-[124px] rounded-xs border border-[#8c8c8c] bg-linear-to-b from-[#f2f2f2] to-[#d4d4d8]" />
            <Tri dir="right" />
          </div>
        </div>
        <div className="flex-1 min-h-0 overflow-hidden bg-[#c0c0c0]"><Scene3D /></div>
      </div>
    </section>
  );
}

function PlanView() {
  return (
    <section className="flex-1 min-w-0 flex flex-col bg-white">
      <div className="flex-1 min-h-0 flex">
        <div className="flex-1 min-w-0 overflow-hidden"><FloorPlan /></div>
        <div className="w-4 flex flex-col items-center bg-[#f0f0f0] pb-1.5">
          <div className="h-[18px] flex items-center"><Tri dir="up" /></div>
          <div className="w-[15px] h-64 flex items-center justify-center rounded-xs border border-[#8c8c8c] bg-linear-to-r from-[#f2f2f2] to-[#c4c4c8]">
            <Grip vertical />
          </div>
          <div className="mt-auto"><Tri dir="down" /></div>
        </div>
      </div>
      <div className="h-4 flex items-center bg-[#f0f0f0] pl-1 pr-[22px]">
        <Tri dir="left" />
        <div className="flex-1 flex justify-center">
          <div className="w-60 h-[15px] mr-[72px] flex items-center justify-center rounded-xs border border-[#8c8c8c] bg-linear-to-b from-[#f2f2f2] to-[#c4c4c8]">
            <Grip />
          </div>
        </div>
        <Tri dir="right" />
      </div>
    </section>
  );
}

function EditDialog({ name, onName }) {
  const [level, setLevel] = useState('16.200');
  const [height, setHeight] = useState('0.000');

  return (
    <div role="dialog" aria-labelledby="dlg-title" className="absolute left-[347px] top-[208px] w-[352px] px-1 pb-1 bg-[#1860ab] border border-[#003a78]">
      <div className="h-[30px] relative flex items-center justify-center pt-1.5 pr-10">
        <h2 id="dlg-title" className="text-xs font-bold text-white">Editar</h2>
        <button type="button" aria-label="Cerrar diálogo" className="absolute right-4 top-2.5">
          <Ico w={15} h={15}><path d="M2.5 2.5L11.5 11.5M11.5 2.5L2.5 11.5" stroke="#fff" strokeWidth="1.3" /></Ico>
        </button>
      </div>
      <form onSubmit={(e) => e.preventDefault()}>
        <div className="flex flex-col gap-1.5 px-2 py-[9px] bg-[#ededed] border-b border-[#c4c4c4]">
          <div className="flex items-center">
            <label htmlFor="ref" className="w-[113px] pl-px whitespace-nowrap">Referencia</label>
            <input id="ref" value={name} onChange={(e) => onName(e.target.value)} className="flex-1 min-w-0 h-5 px-0.5 bg-white border border-[#9ccaea] border-t-[#3c80b4]" />
          </div>
          <div className="flex items-center">
            <label htmlFor="cota" className="w-[113px] pl-px whitespace-nowrap">Cota</label>
            <input id="cota" value={level} onChange={(e) => setLevel(e.target.value)} className="w-[52px] h-5 px-0.5 text-right bg-white border border-[#dde2e8] border-t-[#a8acb4]" />
            <span className="pl-1.5">m</span>
          </div>
          <div className="flex items-center">
            <label htmlFor="alt" className="w-[113px] pl-px whitespace-nowrap">Altura de la instalación</label>
            <input id="alt" value={height} onChange={(e) => setHeight(e.target.value)} className="w-[52px] h-5 px-0.5 text-right bg-white border border-[#dde2e8] border-t-[#a8acb4]" />
            <span className="pl-1.5">m</span>
          </div>
        </div>
        <div className="h-[34px] flex items-center justify-between px-[7px] bg-[#e0e0e0]">
          <button type="submit" className="w-[61px] h-5 rounded-xs border border-[#2c7cac] ring-1 ring-inset ring-[#48c8f0] bg-linear-to-b from-[#eef5f9] to-[#ccdde6]">Aceptar</button>
          <button type="button" className="w-[60px] h-5 rounded-xs border border-[#707070] bg-linear-to-b from-[#f4f4f4] from-50% to-[#d4d4d4]">Cancelar</button>
        </div>
      </form>
    </div>
  );
}

export default function App() {
  const [selected, setSelected] = useState('Planta 5');
  const [name, setName] = useState('Planta 5');

  return (
    <div className="relative h-screen overflow-hidden flex flex-col p-1 bg-[#2f7dce] border border-[#004a9c] text-[11px] text-black font-['Liberation_Sans',Arial,sans-serif]">
      <Header />
      <div className="h-px bg-[#b4b4b4]" />
      <Ribbon />
      <main className="flex-1 min-h-0 flex p-1.5 bg-[#b4b4b4]">
        <div className="w-[444px] flex flex-col">
          <FloorList selected={selected} onSelect={setSelected} />
          <div className="h-2 flex items-center justify-center">
            <Ico w={15} h={2}><path d="M0 1H15" stroke="#666" strokeWidth="2" strokeDasharray="2 2" /></Ico>
          </div>
          <View3D />
        </div>
        <div className="w-1.5 flex flex-col items-center pt-[277px]">
          <Ico w={2} h={15}><path d="M1 0V15" stroke="#666" strokeWidth="2" strokeDasharray="2 2" /></Ico>
        </div>
        <PlanView />
      </main>

      <EditDialog name={name} onName={setName} />

      {/* Callout from the edit button to the dialog */}
      <svg width="280" height="90" viewBox="80 135 280 90" fill="none" className="absolute left-[79px] top-[134px] pointer-events-none" aria-hidden="true">
        <rect x="87.5" y="162.5" width="21" height="23" rx="4" stroke="#f01010" strokeWidth="1.5" />
        <path d="M108 164C170 125 255 145 340 204" stroke="#f01010" strokeWidth="1.3" />
        <path d="M348 210L332 206L338 203L340 196Z" fill="#f01010" />
      </svg>
    </div>
  );
}
